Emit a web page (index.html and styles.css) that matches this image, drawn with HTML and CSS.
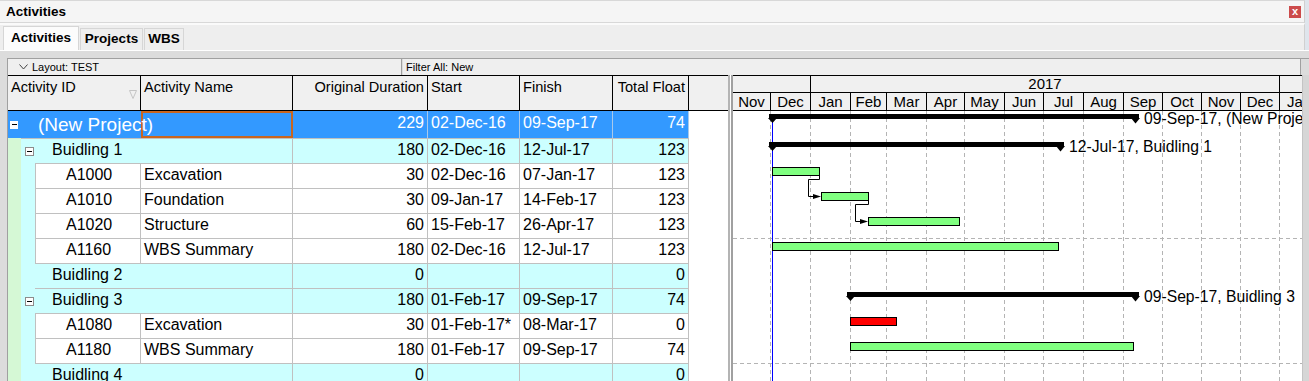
FILE: index.html
```html
<!DOCTYPE html>
<html lang="en">
  <head>
    <meta charset="UTF-8" />
    <meta name="viewport" content="width=device-width, initial-scale=1.0" />
    <title>Activities</title>
    <link rel="stylesheet" href="styles.css">
  </head>
  <body>
    <div class="titlebar">
      <span class="title">Activities</span>
      <span class="close">x</span>
    </div>
    <div class="tabs">
      <div class="tab active">Activities</div>
      <div class="tab projects">Projects</div>
      <div class="tab wbs">WBS</div>
    </div>

    <div class="panel">
      <div class="frame">
        <div class="toolbar">
          <div class="layout-bar">
            <svg class="drop" width="9" height="6" viewBox="0 0 9 6"><polyline points="0.5,0.5 4.5,5 8.5,0.5" fill="none" stroke="#444" stroke-width="1" /></svg>
            Layout: TEST
          </div>
          <div class="filter-bar">Filter All: New</div>
        </div>

        <div class="main">
          <!-- activity table -->
          <div class="table">
            <div class="row head">
              <div class="h first"><span>Activity ID</span><svg class="sort" width="8" height="9" viewBox="0 0 8 9"><polygon points="0.5,0.5 7.5,0.5 4,8.5" fill="none" stroke="#c4c4c4" /></svg></div>
              <div class="h">Activity Name</div>
              <div class="h num">Original Duration</div>
              <div class="h">Start</div>
              <div class="h">Finish</div>
              <div class="h num">Total Float</div>
              <div class="h last"></div>
            </div>

            <div class="row proj">
              <div class="c pname"><span class="pbox"></span>(New Project)</div>
              <div class="c sel"></div>
              <div class="c num">229</div>
              <div class="c">02-Dec-16</div>
              <div class="c">09-Sep-17</div>
              <div class="c num">74</div>
              <div class="blank"></div>
            </div>

            <div class="row grp first">
              <div class="lv0"></div>
              <div class="lv1"><span class="gbox"></span></div>
              <div class="c label">Buidling 1</div>
              <div class="c num">180</div>
              <div class="c">02-Dec-16</div>
              <div class="c">12-Jul-17</div>
              <div class="c num">123</div>
              <div class="blank"></div>
            </div>
            <div class="row act">
              <div class="lv0"></div>
              <div class="lv1"></div>
              <div class="c id">A1000</div>
              <div class="c">Excavation</div>
              <div class="c num">30</div>
              <div class="c">02-Dec-16</div>
              <div class="c">07-Jan-17</div>
              <div class="c num">123</div>
              <div class="blank"></div>
            </div>
            <div class="row act">
              <div class="lv0"></div>
              <div class="lv1"></div>
              <div class="c id">A1010</div>
              <div class="c">Foundation</div>
              <div class="c num">30</div>
              <div class="c">09-Jan-17</div>
              <div class="c">14-Feb-17</div>
              <div class="c num">123</div>
              <div class="blank"></div>
            </div>
            <div class="row act">
              <div class="lv0"></div>
              <div class="lv1"></div>
              <div class="c id">A1020</div>
              <div class="c">Structure</div>
              <div class="c num">60</div>
              <div class="c">15-Feb-17</div>
              <div class="c">26-Apr-17</div>
              <div class="c num">123</div>
              <div class="blank"></div>
            </div>
            <div class="row act">
              <div class="lv0"></div>
              <div class="lv1"></div>
              <div class="c id">A1160</div>
              <div class="c">WBS Summary</div>
              <div class="c num">180</div>
              <div class="c">02-Dec-16</div>
              <div class="c">12-Jul-17</div>
              <div class="c num">123</div>
              <div class="blank"></div>
            </div>

            <div class="row grp">
              <div class="lv0"></div>
              <div class="lv1"></div>
              <div class="c label">Buidling 2</div>
              <div class="c num">0</div>
              <div class="c"></div>
              <div class="c"></div>
              <div class="c num">0</div>
              <div class="blank"></div>
            </div>

            <div class="row grp">
              <div class="lv0"></div>
              <div class="lv1"><span class="gbox"></span></div>
              <div class="c label">Buidling 3</div>
              <div class="c num">180</div>
              <div class="c">01-Feb-17</div>
              <div class="c">09-Sep-17</div>
              <div class="c num">74</div>
              <div class="blank"></div>
            </div>
            <div class="row act">
              <div class="lv0"></div>
              <div class="lv1"></div>
              <div class="c id">A1080</div>
              <div class="c">Excavation</div>
              <div class="c num">30</div>
              <div class="c">01-Feb-17*</div>
              <div class="c">08-Mar-17</div>
              <div class="c num">0</div>
              <div class="blank"></div>
            </div>
            <div class="row act">
              <div class="lv0"></div>
              <div class="lv1"></div>
              <div class="c id">A1180</div>
              <div class="c">WBS Summary</div>
              <div class="c num">180</div>
              <div class="c">01-Feb-17</div>
              <div class="c">09-Sep-17</div>
              <div class="c num">74</div>
              <div class="blank"></div>
            </div>

            <div class="row grp">
              <div class="lv0"></div>
              <div class="lv1"></div>
              <div class="c label">Buidling 4</div>
              <div class="c num">0</div>
              <div class="c"></div>
              <div class="c"></div>
              <div class="c num">0</div>
              <div class="blank"></div>
            </div>
          </div>

          <div class="splitter"></div>

          <!-- gantt chart -->
          <div class="gantt">
            <div class="ghead">
              <div class="years">
                <div class="yr"></div>
                <div class="yr">2017</div>
                <div class="yr"></div>
              </div>
              <div class="months">
                <div class="mo">Nov</div>
                <div class="mo">Dec</div>
                <div class="mo">Jan</div>
                <div class="mo">Feb</div>
                <div class="mo">Mar</div>
                <div class="mo">Apr</div>
                <div class="mo">May</div>
                <div class="mo">Jun</div>
                <div class="mo">Jul</div>
                <div class="mo">Aug</div>
                <div class="mo">Sep</div>
                <div class="mo">Oct</div>
                <div class="mo">Nov</div>
                <div class="mo">Dec</div>
                <div class="mo">Jan</div>
              </div>
            </div>
            <svg class="chart" width="569" height="270" viewBox="0 0 569 270">
              <g stroke="#b4b4b4" stroke-width="1" stroke-dasharray="4 3">
                <line x1="37.5" y1="0" x2="37.5" y2="270" />
                <line x1="77.5" y1="0" x2="77.5" y2="270" />
                <line x1="117.5" y1="0" x2="117.5" y2="270" />
                <line x1="153.5" y1="0" x2="153.5" y2="270" />
                <line x1="193.5" y1="0" x2="193.5" y2="270" />
                <line x1="231.5" y1="0" x2="231.5" y2="270" />
                <line x1="271.5" y1="0" x2="271.5" y2="270" />
                <line x1="310.5" y1="0" x2="310.5" y2="270" />
                <line x1="350.5" y1="0" x2="350.5" y2="270" />
                <line x1="390.5" y1="0" x2="390.5" y2="270" />
                <line x1="429.5" y1="0" x2="429.5" y2="270" />
                <line x1="468.5" y1="0" x2="468.5" y2="270" />
                <line x1="507.5" y1="0" x2="507.5" y2="270" />
                <line x1="546.5" y1="0" x2="546.5" y2="270" />
                <line x1="0" y1="127.5" x2="569" y2="127.5" />
                <line x1="0" y1="252.5" x2="569" y2="252.5" />
              </g>

              <!-- data date -->
              <line x1="39.5" y1="6" x2="39.5" y2="270" stroke="#0000ff" stroke-width="1" />

              <!-- summary bars -->
              <g fill="#000">
                <rect x="36" y="3" width="370" height="5" />
                <polygon points="35,7 44,7 39.5,12" />
                <polygon points="398,7 407,7 402.5,12.5" />

                <rect x="36" y="31" width="295" height="5" />
                <polygon points="35,35 44,35 39.5,40" />
                <polygon points="323,35 332,35 327.5,40.5" />

                <rect x="114" y="181" width="292" height="5" />
                <polygon points="113,185 122,185 117.5,190" />
                <polygon points="398,185 407,185 402.5,190.5" />
              </g>

              <!-- activity bars -->
              <g stroke="#000" stroke-width="1">
                <rect x="39.5" y="56.5" width="47" height="8" fill="#80ff80" />
                <rect x="88.5" y="81.5" width="47" height="8" fill="#80ff80" />
                <rect x="135.5" y="106.5" width="91" height="8" fill="#80ff80" />
                <rect x="39.5" y="131.5" width="286" height="8" fill="#80ff80" />
                <rect x="117.5" y="206.5" width="46" height="8" fill="#ff0000" />
                <rect x="117.5" y="231.5" width="283" height="8" fill="#80ff80" />
              </g>

              <!-- relationships -->
              <g fill="none" stroke="#000" stroke-width="1">
                <path d="M86.5 65 V68.5 H75.5 V85.5 H82" />
                <path d="M135.5 90 V93.5 H122.5 V110.5 H130" />
              </g>
              <g fill="#000">
                <polygon points="80,83 88,85.5 80,88" />
                <polygon points="127,108 135,110.5 127,113" />
              </g>

              <g class="lbl">
                <text x="411" y="13">09-Sep-17, (New Project)</text>
                <text x="336" y="41">12-Jul-17, Buidling 1</text>
                <text x="411" y="191">09-Sep-17, Buidling 3</text>
              </g>
            </svg>
          </div>

          <div class="scrollbar"></div>
        </div>
      </div>
    </div>
  </body>
</html>
```

FILE: styles.css
```css
* {
  box-sizing: border-box;
}
body {
  margin: 0;
  width: 1309px;
  height: 381px;
  overflow: hidden;
  font-family: "Liberation Sans", Arial, sans-serif;
  background-color: #dfe5ec;
  color: #000;
}

/* window title and tabs */
.titlebar {
  width: 1305px;
  height: 23px;
  display: flex;
  align-items: center;
  justify-content: space-between;
  padding: 0 3px 0 6px;
  background-color: #f5f5f5;
  border-top: 1px solid #d8d8d8;
  border-bottom: 1px solid #d8d8d8;
  border-right: 1px solid #d0d0d0;
}
.title {
  font-size: 13.5px;
  font-weight: bold;
}
.close {
  width: 12px;
  height: 12px;
  background-color: #cc4b4b;
  color: white;
  font-size: 11px;
  font-weight: bold;
  line-height: 10px;
  text-align: center;
}
.tabs {
  width: 1305px;
  height: 27px;
  display: flex;
  align-items: flex-end;
  padding-left: 3px;
  background-color: #eeeeee;
  border-top: 2px solid #fafafa;
  border-right: 1px solid #d0d0d0;
}
.tab {
  height: 22px;
  font-size: 13.5px;
  font-weight: bold;
  line-height: 20px;
  text-align: center;
  border: 1px solid #d6d6d6;
  border-bottom: none;
  margin-right: 1px;
}
.tab.active {
  width: 76px;
  height: 24px;
  line-height: 21px;
  background-color: #fcfcfc;
}
.tab.projects {
  width: 63px;
}
.tab.wbs {
  width: 40px;
}

/* panel */
.panel {
  height: 331px;
  padding: 7px 0 0 7px;
  background-color: #dcdcdc;
  border-top: 1px solid #ffffff;
}
.frame {
  height: 324px;
  border-left: 1px solid #a0a0a0;
}
.toolbar {
  display: flex;
  height: 17px;
  border-top: 1px solid #a0a0a0;
  font-size: 11px;
  line-height: 16px;
}
.layout-bar {
  width: 394px;
  display: flex;
  align-items: center;
  gap: 4px;
  padding-left: 11px;
  background-color: #efefef;
  border-right: 1px solid #a0a0a0;
  margin-right: 1px;
}
.filter-bar {
  width: 898px;
  padding-left: 3px;
  background-color: #efefef;
  border-right: 1px solid #a0a0a0;
}

.main {
  display: flex;
  height: 306px;
  overflow: hidden;
}

/* table */
.table {
  width: 720px;
  flex-shrink: 0;
  background-color: #ffffff;
}
.row {
  display: grid;
  grid-template-columns: 13px 14px 106px 152px 135px 92px 93px 76px 39px;
  font-size: 16px;
  line-height: 22px;
  white-space: nowrap;
}
.head {
  height: 36px;
  grid-template-columns: 133px 152px 135px 92px 93px 76px 39px;
  font-size: 14.6px;
  line-height: 18px;
  background-color: #f0f0f0;
  border-top: 1px solid #000;
  border-bottom: 1px solid #000;
}
.h {
  padding: 2px 3px;
  border-right: 1px solid #000;
}
.h.first {
  display: flex;
  justify-content: space-between;
}
.h.first .sort {
  align-self: center;
  margin-top: 2px;
}
.h.last {
  border-right: none;
}
.num {
  text-align: right;
}

.c {
  padding: 0 3px 2px;
  border-right: 1px solid #c0c0c0;
  border-bottom: 1px solid #c0c0c0;
  overflow: hidden;
}
.blank {
  background-color: #ffffff;
}
.lv0 {
  background-color: #d5f8d5;
}
.lv1 {
  display: flex;
  align-items: center;
  background-color: #ccffff;
}

.proj {
  height: 27px;
  color: white;
  background: linear-gradient(to right, #3399ff 680px, #ffffff 680px);
}
.proj .c {
  line-height: 23px;
  padding-bottom: 4px;
  border-bottom: none;
  border-right-color: #a9c9ea;
}
.proj .pname {
  position: relative;
  z-index: 1;
  grid-column: span 3;
  display: flex;
  align-items: center;
  padding: 0 0 0 2px;
  font-size: 19px;
  line-height: 27px;
  border-right: none;
  overflow: visible;
}
.pbox {
  flex-shrink: 0;
  width: 8px;
  height: 8px;
  margin-right: 20px;
  display: flex;
  align-items: center;
  justify-content: center;
  background-color: #ffffff;
}
.pbox::after {
  content: "";
  width: 5px;
  height: 1px;
  background-color: #000;
}
.proj .sel {
  border: 2px solid #c9661f;
}

.grp .c {
  background-color: #ccffff;
}
.grp .label {
  grid-column: span 2;
  padding-left: 17px;
}
.grp.first .c,
.grp.first .lv1 {
  border-top: 1px solid #c0c0c0;
}
.gbox {
  flex-shrink: 0;
  width: 9px;
  height: 9px;
  margin-left: 4px;
  display: flex;
  align-items: center;
  justify-content: center;
  background-color: #ffffff;
  border: 1px solid #8c8c8c;
}
.gbox::after {
  content: "";
  width: 5px;
  height: 1px;
  background-color: #000;
}
.act .c {
  background-color: #ffffff;
}
.act .id {
  padding-left: 30px;
  border-left: 1px solid #c0c0c0;
}

.splitter {
  width: 5px;
  flex-shrink: 0;
  background-color: #ffffff;
  border-left: 2px solid #b4b4b4;
  border-right: 2px solid #a0a0a0;
}

/* gantt */
.gantt {
  width: 569px;
  flex-shrink: 0;
  overflow: hidden;
  background-color: #ffffff;
}
.ghead {
  background-color: #f0f0f0;
  border-top: 1px solid #000;
  border-bottom: 1px solid #000;
  font-size: 15px;
  white-space: nowrap;
}
.years {
  display: grid;
  grid-template-columns: 78px 469px 39px;
  height: 17px;
  line-height: 16px;
  border-bottom: 1px solid #000;
}
.months {
  display: grid;
  grid-template-columns: 38px 40px 40px 36px 40px 38px 40px 39px 40px 40px 39px 39px 39px 39px 39px;
  height: 17px;
  line-height: 17px;
}
.yr,
.mo {
  text-align: center;
  border-right: 1px solid #000;
  overflow: hidden;
}
.chart {
  display: block;
}
.lbl {
  font-family: "Liberation Sans", Arial, sans-serif;
  font-size: 15.7px;
  fill: #000;
}

.scrollbar {
  flex: 1;
  background-color: #d6d6d6;
  border-left: 1px solid #c4c4c4;
}
```
